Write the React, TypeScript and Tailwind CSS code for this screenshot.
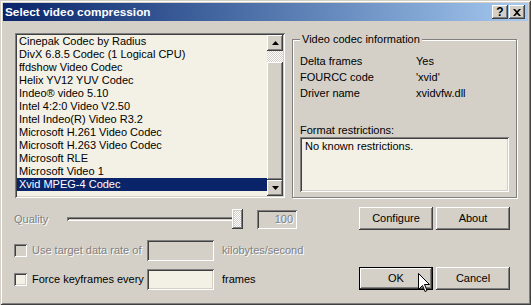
import React from 'react';

const codecs = [
  'Cinepak Codec by Radius',
  'DivX 6.8.5 Codec (1 Logical CPU)',
  'ffdshow Video Codec',
  'Helix YV12 YUV Codec',
  'Indeo® video 5.10',
  'Intel 4:2:0 Video V2.50',
  'Intel Indeo(R) Video R3.2',
  'Microsoft H.261 Video Codec',
  'Microsoft H.263 Video Codec',
  'Microsoft RLE',
  'Microsoft Video 1',
  'Xvid MPEG-4 Codec',
];

// classic 3D edges
const raised =
  'shadow-[inset_-1px_-1px_0_#404040,inset_1px_1px_0_#fff,inset_-2px_-2px_0_#808080,inset_2px_2px_0_#d4d0c8]';
const sunken =
  'shadow-[inset_1px_1px_0_#808080,inset_-1px_-1px_0_#fff,inset_2px_2px_0_#404040,inset_-2px_-2px_0_#d4d0c8]';
const disabledText = 'text-[#808080] [text-shadow:1px_1px_0_#fff]';

const Arrow = ({ up }: { up?: boolean }) => (
  <svg width="7" height="4" viewBox="0 0 7 4">
    {up ? <path d="M3.5 0 L7 4 L0 4 Z" fill="#000" /> : <path d="M0 0 L7 0 L3.5 4 Z" fill="#000" />}
  </svg>
);

const Button = ({ label, isDefault }: { label: string; isDefault?: boolean }) => (
  <div
    className={`w-[74px] h-[23px] flex items-center justify-center bg-[#d4d0c8] ${
      isDefault ? 'border border-black' : ''
    }`}
  >
    <div className={`w-full h-full flex items-center justify-center ${raised}`}>{label}</div>
  </div>
);

const Checkbox = ({ disabled }: { disabled?: boolean }) => (
  <div className={`w-[13px] h-[13px] shrink-0 ${sunken} ${disabled ? 'bg-[#d4d0c8]' : 'bg-[#f3f0e6]'}`} />
);

const TitleButton = ({ children }: { children: React.ReactNode }) => (
  <div
    className={`w-[16px] h-[14px] bg-[#d4d0c8] flex items-center justify-center text-[12px] font-bold leading-none text-black ${raised}`}
  >
    {children}
  </div>
);

export default function App() {
  return (
    <div
      className={`relative w-[531px] h-[305px] bg-[#d4d0c8] p-[3px] text-[11px] leading-[13px] text-black font-['Liberation_Sans',Arial,sans-serif] shadow-[inset_1px_1px_0_#d4d0c8,inset_-1px_-1px_0_#404040,inset_2px_2px_0_#fff,inset_-2px_-2px_0_#808080]`}
    >
      {/* title bar */}
      <div className="h-[18px] flex items-center pl-[2px] pr-[3px] bg-gradient-to-r from-[#0a246a] to-[#a6caf0]">
        <span className="flex-1 text-white font-bold text-[11.8px]">Select video compression</span>
        <TitleButton>?</TitleButton>
        <div className="ml-[1px]">
          <TitleButton>
            <svg width="8" height="7" viewBox="0 0 8 7">
              <path d="M0 0 L2 0 L4 2 L6 0 L8 0 L5 3.5 L8 7 L6 7 L4 5 L2 7 L0 7 L3 3.5 Z" fill="#000" />
            </svg>
          </TitleButton>
        </div>
      </div>

      {/* top row */}
      <div className="flex gap-[7px] pl-[12px] pt-[12px]">
        {/* codec list */}
        <div className={`w-[270px] h-[165px] p-[2px] bg-[#f3f0e6] flex ${sunken}`}>
          <div className="flex-1 flex flex-col">
            {codecs.map((c, i) => (
              <div
                key={c}
                className={`h-[13px] pl-[2px] whitespace-nowrap ${
                  i === codecs.length - 1 ? 'bg-[#0a246a] text-white' : ''
                }`}
              >
                {c}
              </div>
            ))}
          </div>
          <div className="w-[16px] flex flex-col">
            <div className={`h-[16px] bg-[#d4d0c8] flex items-center justify-center ${raised}`}>
              <Arrow up />
            </div>
            <div className="h-[11px] bg-[repeating-conic-gradient(#fff_0_25%,#d4d0c8_0_50%)] bg-[length:2px_2px]" />
            <div className={`flex-1 bg-[#d4d0c8] ${raised}`} />
            <div className={`h-[16px] bg-[#d4d0c8] flex items-center justify-center ${raised}`}>
              <Arrow />
            </div>
          </div>
        </div>

        {/* codec info */}
        <fieldset className="w-[225px] h-[165px] border border-[#808080] pl-[7px] pr-[7px] pb-[5px] shadow-[inset_1px_1px_0_#fff,1px_1px_0_#fff] flex flex-col">
          <legend className="px-[2px] bg-[#d4d0c8]">Video codec information</legend>
          <div className="grid grid-cols-[116px_1fr] auto-rows-[16px] items-center mt-[7px]">
            <span>Delta frames</span>
            <span>Yes</span>
            <span>FOURCC code</span>
            <span>'xvid'</span>
            <span>Driver name</span>
            <span>xvidvfw.dll</span>
          </div>
          <div className="mt-auto">Format restrictions:</div>
          <div className={`h-[55px] bg-[#f3f0e6] px-[5px] py-[3px] ${sunken}`}>No known restrictions.</div>
        </fieldset>
      </div>

      {/* bottom */}
      <div className="flex pl-[11px]">
        <div className="w-[345px] flex flex-col pt-[11px]">
          <div className="h-[20px] flex items-center">
            <span className={`w-[53px] ${disabledText}`}>Quality</span>
            <div className="flex items-center">
              <div className={`w-[170px] h-[4px] ${sunken}`} />
              <div
                className={`w-[11px] h-[20px] -ml-[5px] bg-[repeating-conic-gradient(#fff_0_25%,#d4d0c8_0_50%)] bg-[length:2px_2px] ${raised}`}
              />
            </div>
            <div className={`ml-[14px] w-[40px] h-[19px] flex items-center justify-end pr-[4px] ${sunken} ${disabledText}`}>
              100
            </div>
          </div>
          <div className="h-[21px] mt-[11px] flex items-center">
            <Checkbox disabled />
            <span className={`ml-[5px] w-[115px] ${disabledText}`}>Use target data rate of</span>
            <div className={`w-[67px] h-[21px] ${sunken}`} />
            <span className={`ml-[8px] ${disabledText}`}>kilobytes/second</span>
          </div>
          <div className="h-[21px] mt-[8px] flex items-center">
            <Checkbox />
            <span className="ml-[5px] w-[115px]">Force keyframes every</span>
            <div className={`w-[67px] h-[21px] bg-[#f3f0e6] ${sunken}`} />
            <span className="ml-[8px]">frames</span>
          </div>
        </div>
        <div className="flex flex-col pt-[9px]">
          <div className="flex gap-[3px]">
            <Button label="Configure" />
            <Button label="About" />
          </div>
          <div className="flex gap-[3px] mt-[37px]">
            <Button label="OK" isDefault />
            <Button label="Cancel" />
          </div>
        </div>
      </div>

      {/* mouse pointer */}
      <svg className="absolute left-[418px] top-[273px]" width="12" height="20" viewBox="0 0 12 20">
        <path
          d="M0.5 0.5 L0.5 16.5 L4.5 12.5 L7 18.5 L9 17.5 L6.5 11.5 L11.5 11.5 Z"
          fill="#fff"
          stroke="#000"
          strokeWidth="1"
        />
      </svg>
    </div>
  );
}
